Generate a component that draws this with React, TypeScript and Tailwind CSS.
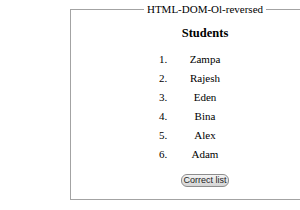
import React from "react";

const students = ["Zampa", "Rajesh", "Eden", "Bina", "Alex", "Adam"];

export default function App() {
  return (
    <div className="w-[300px] h-[210px] overflow-hidden bg-white text-black font-['Liberation_Serif','Times_New_Roman',serif]">
      <fieldset className="ml-[70px] mt-[3px] w-[270px] border border-[#a3a3a3]">
        <legend className="mx-auto px-[3px] text-[11px] leading-[13px]">HTML-DOM-Ol-reversed</legend>
        <div className="flex flex-col pb-[12px]">
          <h3 className="mt-[10px] text-center text-[12.5px] leading-[14px] font-bold">Students</h3>
          <ol className="mt-[10px] ml-[88px] flex flex-col text-[11px]">
            {students.map((s, i) => (
              <li key={s} className="flex h-[19px] items-center leading-[19px]">
                <span className="w-[9px]">{6 - (5 - i)}.</span>
                <span className="w-[74px] text-center">{s}</span>
              </li>
            ))}
          </ol>
          <div className="mt-[10px] flex justify-center">
            <button className="h-[13px] w-[48px] rounded-[6px] border border-[#8d8d8d] bg-gradient-to-b from-[#f4f4f4] to-[#d4d4d4] px-0 text-[9px] leading-[11px] font-['Liberation_Sans',Arial,sans-serif] text-[#222]">
              Correct list
            </button>
          </div>
        </div>
      </fieldset>
    </div>
  );
}
